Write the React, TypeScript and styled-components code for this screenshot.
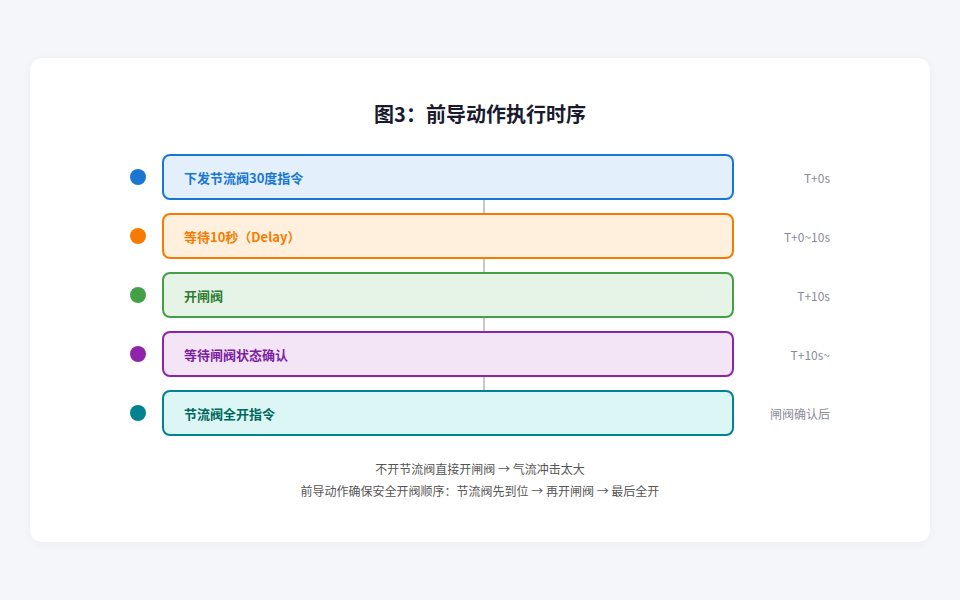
import React from 'react'
import styled, { createGlobalStyle } from 'styled-components'

const GlobalStyle = createGlobalStyle`
  body {
    margin: 0;
    background: #f5f6fa;
    font-family: 'Noto Sans CJK SC', 'Noto Sans', sans-serif;
  }
`

const Page = styled.div`
  width: 960px;
  height: 600px;
  padding: 58px 30px;
  box-sizing: border-box;
`

const Card = styled.div`
  background: #fff;
  border-radius: 12px;
  height: 484px;
  box-shadow: 0 2px 10px rgba(0, 0, 0, 0.04);
  padding-top: 38px;
  box-sizing: border-box;
  display: flex;
  flex-direction: column;
  align-items: center;
`

const Title = styled.h2`
  margin: 0 0 22px;
  font-size: 20px;
  font-weight: 700;
  color: #1a1a2e;
  line-height: 36px;
`

const Timeline = styled.div`
  width: 700px;
  display: flex;
  flex-direction: column;
`

const Row = styled.div`
  display: flex;
  align-items: center;
  height: 46px;
`

const Dot = styled.span<{ $c: string }>`
  width: 16px;
  height: 16px;
  border-radius: 50%;
  background: ${(p) => p.$c};
  margin: 0 16px 0 0;
  flex-shrink: 0;
`

const Box = styled.div<{ $c: string; $bg: string }>`
  width: 572px;
  height: 46px;
  box-sizing: border-box;
  border: 2px solid ${(p) => p.$c};
  background: ${(p) => p.$bg};
  border-radius: 8px;
  color: ${(p) => p.$c};
  font-size: 13px;
  font-weight: 700;
  padding-left: 20px;
  display: flex;
  align-items: center;
`

const Time = styled.div`
  flex: 1;
  text-align: right;
  font-size: 12px;
  color: #8a8a99;
`

const Connector = styled.div`
  height: 13px;
  width: 2px;
  background: #c8c8c8;
  margin-left: 353px;
`

const Note = styled.div`
  margin-top: 22px;
  text-align: center;
  font-size: 12px;
  color: #555;
  line-height: 22px;
`

const steps = [
  { text: '下发节流阀30度指令', time: 'T+0s', c: '#1976d2', bg: '#e3f0fc' },
  { text: '等待10秒（Delay）', time: 'T+0~10s', c: '#f57c00', bg: '#fff0de' },
  { text: '开闸阀', time: 'T+10s', c: '#2e7d32', bg: '#e6f4e7', border: '#43a047' },
  { text: '等待闸阀状态确认', time: 'T+10s~', c: '#7b1fa2', bg: '#f3e5f5', border: '#8e24aa' },
  { text: '节流阀全开指令', time: '闸阀确认后', c: '#00695c', bg: '#dcf5f5', border: '#00838f' },
]

const App: React.FC = () => (
  <Page>
    <GlobalStyle />
    <Card>
      <Title>图3：前导动作执行时序</Title>
      <Timeline>
        {steps.map((s, i) => (
          <React.Fragment key={s.text}>
            {i > 0 && <Connector />}
            <Row>
              <Dot $c={s.border || s.c} />
              <Box $c={s.border || s.c} $bg={s.bg}>
                <span style={{ color: s.c }}>{s.text}</span>
              </Box>
              <Time>{s.time}</Time>
            </Row>
          </React.Fragment>
        ))}
      </Timeline>
      <Note>
        不开节流阀直接开闸阀 → 气流冲击太大
        <br />
        前导动作确保安全开阀顺序：节流阀先到位 → 再开闸阀 → 最后全开
      </Note>
    </Card>
  </Page>
)

export default App
